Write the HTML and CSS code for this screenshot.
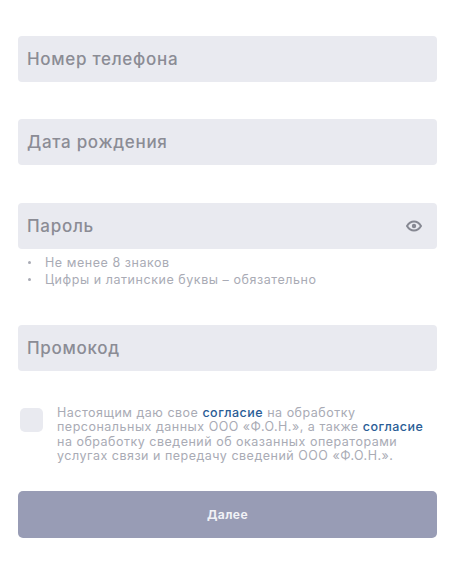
FILE: index.html
```html
<!DOCTYPE html>
<html lang="ru">
<head>
    <meta charset="UTF-8">
    <link rel="stylesheet" href="styles.css">
</head>
<body>
    <form class="form">
        <div class="field field-phone">Номер телефона</div>
        <div class="field field-date">Дата рождения</div>
        <div class="field field-password">
            <span>Пароль</span>
            <svg class="eye" width="16" height="12" viewBox="0 0 16 12">
                <path d="M1 6C2.800 3 5.200 1.500 8 1.500S13.200 3 15 6c-1.800 3-4.200 4.500-7 4.500S2.800 9 1 6z" fill="none" stroke="#868892" stroke-width="2"/>
                <circle cx="8" cy="6" r="2.200" fill="#868892"/>
            </svg>
        </div>
        <ul class="hints">
            <li>Не менее 8 знаков</li>
            <li>Цифры и латинские буквы – обязательно</li>
        </ul>
        <div class="field field-promo">Промокод</div>
        <div class="agree">
            <div class="checkbox"></div>
            <p class="agree-text">Настоящим даю свое <a href="#">согласие</a> на обработку<br>персональных данных ООО «Ф.О.Н.», а также <a href="#">согласие</a><br>на обработку сведений об оказанных операторами<br>услугах связи и передачу сведений ООО «Ф.О.Н.».</p>
        </div>
        <button class="next" type="button">Далее</button>
    </form>
</body>
</html>
```

FILE: styles.css
```css
body {
    margin: 0;
    background-color: #fff;
    font-family: Inter, "Noto Sans", sans-serif;
}
.form {
    display: flex;
    flex-direction: column;
    padding: 36px 14px 0 18px;
}
.field {
    display: flex;
    align-items: center;
    justify-content: space-between;
    height: 46px;
    padding: 0 15px 0 9px;
    border-radius: 4px;
    background-color: #e9eaf0;
    color: #8b8c95;
    font-size: 17px;
    font-weight: 500;
    letter-spacing: 0.7px;
}
.field-date {
    margin-top: 37px;
}
.field-password {
    margin-top: 38px;
}
.field-promo {
    margin-top: 38px;
}
.hints {
    display: flex;
    flex-direction: column;
    height: 33px;
    margin: 5px 0 0;
    padding: 0 0 0 10px;
    color: #a9abb5;
    font-size: 12.500px;
    letter-spacing: 0.55px;
    line-height: 17px;
    list-style: none;
}
.hints li {
    display: flex;
    align-items: center;
    gap: 14px;
}
.hints li::before {
    content: "";
    width: 3px;
    height: 3px;
    border-radius: 50%;
    background-color: #a9abb5;
}
.agree {
    display: flex;
    margin-top: 35px;
    padding-left: 2px;
}
.checkbox {
    flex: none;
    width: 23px;
    height: 24px;
    margin-top: 2px;
    border-radius: 5px;
    background-color: #e9eaf0;
}
.agree-text {
    margin: 0 0 0 14px;
    color: #a9abb5;
    font-size: 12.500px;
    letter-spacing: 0.5px;
    line-height: 14.300px;
    white-space: nowrap;
}
.agree-text a {
    color: #2a5d96;
    font-weight: 500;
    text-decoration: none;
}
.next {
    height: 47px;
    margin-top: 28px;
    border: 0;
    border-radius: 5px;
    background-color: #989cb5;
    color: #f1f2f6;
    font-family: inherit;
    font-size: 12px;
    font-weight: 700;
    letter-spacing: 0.4px;
}
```
